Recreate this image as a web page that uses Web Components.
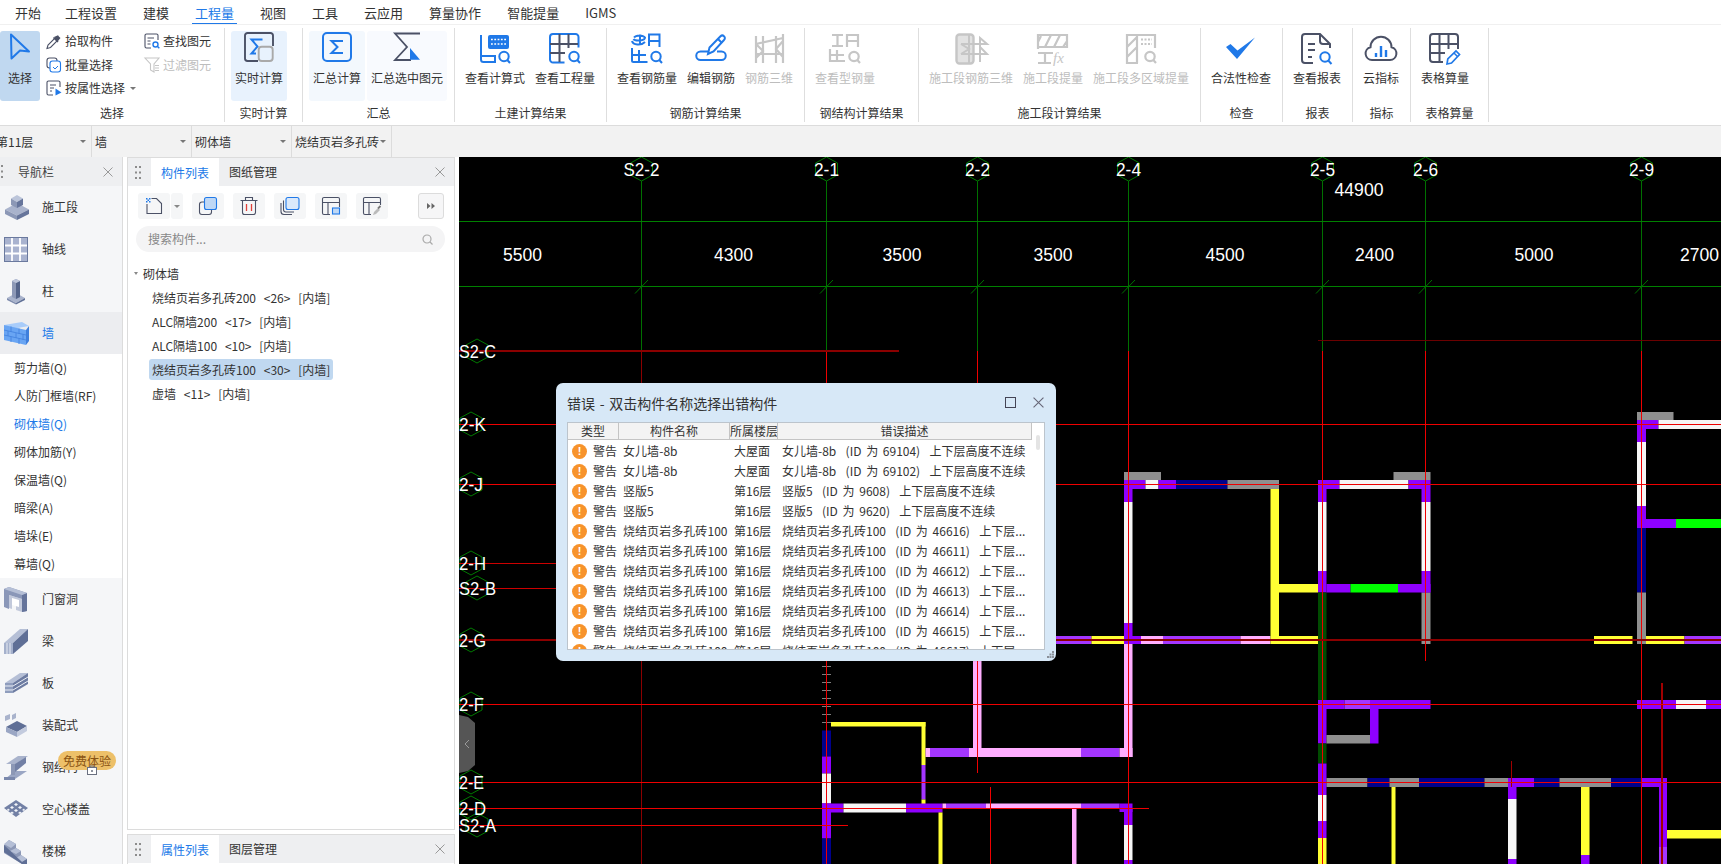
<!DOCTYPE html>
<html lang="zh">
<head>
<meta charset="utf-8">
<title>算量</title>
<style>
html,body{margin:0;padding:0;height:864px;overflow:hidden;background:#fff;color:#333;font:12px/16px "Noto Sans CJK SC","Noto Sans",sans-serif}
app-shell{height:864px}
</style>
</head>
<body>
<app-shell>
  <app-tabs>
    <tab-item style="margin-right:-2px">开始</tab-item><tab-item>工程设置</tab-item><tab-item>建模</tab-item><tab-item active>工程量</tab-item><tab-item>视图</tab-item><tab-item>工具</tab-item><tab-item>云应用</tab-item><tab-item>算量协作</tab-item><tab-item>智能提量</tab-item><tab-item>IGMS</tab-item>
  </app-tabs>
  <app-ribbon>
    <rb-group title="选择" w="225" flush>
      <rb-button icon="cursor" label="选择" active></rb-button>
      <rb-col style="margin-left:6px;width:98px">
        <rb-small icon="pick">拾取构件</rb-small>
        <rb-small icon="batch">批量选择</rb-small>
        <rb-small icon="attr" caret>按属性选择</rb-small>
      </rb-col>
      <rb-col>
        <rb-small icon="find">查找图元</rb-small>
        <rb-small icon="filter" disabled>过滤图元</rb-small>
      </rb-col>
    </rb-group>
    <rb-group title="实时计算" w="78"><rb-button icon="realtime" label="实时计算" hl="#e8f2fd" style="margin-left:1px"></rb-button></rb-group>
    <rb-group title="汇总" w="152">
      <rb-button icon="sum" label="汇总计算" hl="#f3f8fd" style="margin-left:1px"></rb-button>
      <rb-button icon="sumsel" label="汇总选中图元" hl="#f8fafe" style="margin-left:2px"></rb-button>
    </rb-group>
    <rb-group title="土建计算结果" w="152">
      <rb-button icon="formula" label="查看计算式"></rb-button><rb-button icon="qty" label="查看工程量"></rb-button>
    </rb-group>
    <rb-group title="钢筋计算结果" w="198">
      <rb-button icon="rebar" label="查看钢筋量"></rb-button><rb-button icon="edit" label="编辑钢筋"></rb-button><rb-button icon="rebar3d" label="钢筋三维" disabled></rb-button>
    </rb-group>
    <rb-group title="钢结构计算结果" w="114"><rb-button icon="steel" label="查看型钢量" disabled></rb-button></rb-group>
    <rb-group title="施工段计算结果" w="282">
      <rb-button icon="seg3d" label="施工段钢筋三维" disabled></rb-button><rb-button icon="segfx" label="施工段提量" disabled></rb-button><rb-button icon="segarea" label="施工段多区域提量" disabled></rb-button>
    </rb-group>
    <rb-group title="检查" w="82"><rb-button icon="check" label="合法性检查"></rb-button></rb-group>
    <rb-group title="报表" w="70"><rb-button icon="report" label="查看报表"></rb-button></rb-group>
    <rb-group title="指标" w="58"><rb-button icon="cloud" label="云指标"></rb-button></rb-group>
    <rb-group title="表格算量" w="78"><rb-button icon="sheet" label="表格算量"></rb-button></rb-group>
  </app-ribbon>
  <app-selectors>
    <sel-cell w="92" clip>第11层</sel-cell><sel-cell w="100">墙</sel-cell><sel-cell w="100">砌体墙</sel-cell><sel-cell w="100">烧结页岩多孔砖</sel-cell>
  </app-selectors>
  <app-main>
    <nav-panel>
      <nav-item icon="n-seg">施工段</nav-item>
      <nav-item icon="n-axis">轴线</nav-item>
      <nav-item icon="n-col">柱</nav-item>
      <nav-item icon="n-wall" active>墙</nav-item>
      <nav-sub>剪力墙(Q)</nav-sub>
      <nav-sub>人防门框墙(RF)</nav-sub>
      <nav-sub active>砌体墙(Q)</nav-sub>
      <nav-sub>砌体加筋(Y)</nav-sub>
      <nav-sub>保温墙(Q)</nav-sub>
      <nav-sub>暗梁(A)</nav-sub>
      <nav-sub>墙垛(E)</nav-sub>
      <nav-sub>幕墙(Q)</nav-sub>
      <nav-item icon="n-door">门窗洞</nav-item>
      <nav-item icon="n-beam">梁</nav-item>
      <nav-item icon="n-slab">板</nav-item>
      <nav-item icon="n-pre">装配式</nav-item>
      <nav-item icon="n-steel" badge>钢结构</nav-item>
      <nav-item icon="n-hollow">空心楼盖</nav-item>
      <nav-item icon="n-stair">楼梯</nav-item>
    </nav-panel>
    <mid-column>
      <dock-panel grow tab1="构件列表" tab2="图纸管理">
        <part-toolbar></part-toolbar>
        <part-search></part-search>
        <part-tree>
          <tree-row head>砌体墙</tree-row>
          <tree-row>烧结页岩多孔砖200  &lt;26&gt;  [内墙]</tree-row>
          <tree-row>ALC隔墙200  &lt;17&gt;  [内墙]</tree-row>
          <tree-row>ALC隔墙100  &lt;10&gt;  [内墙]</tree-row>
          <tree-row selected>烧结页岩多孔砖100  &lt;30&gt;  [内墙]</tree-row>
          <tree-row>虚墙  &lt;11&gt;  [内墙]</tree-row>
        </part-tree>
      </dock-panel>
      <dock-panel tab1="属性列表" tab2="图层管理"></dock-panel>
    </mid-column>
    <cad-canvas>
      <error-dialog></error-dialog>
    </cad-canvas>
  </app-main>
</app-shell>

<script>
const B='#2079e8',D='#4b5166',G='#c6c6c6';
const ICONS={
 cursor:[20,27,`<path d="M1 1.500 19 18.500 10 17.500 1.500 25.500Z" fill="#c0d8f0" stroke="${B}" stroke-width="2" stroke-linejoin="round"/>`],
 pick:[15,15,`<path d="M1 14.500 2 11 9 4 11.500 6.500 4.500 13.500Z" fill="#fff" stroke="${D}" stroke-width="1.100"/><path d="M8 3 10 5 13 2.500 12 1.200Zm2 2 2 2 2.500-3-1.600-1.600Z" fill="${D}"/><path d="M7.500 3.500 12 8" stroke="${D}" stroke-width="1.500"/>`],
 batch:[15,16,`<rect x="1" y="1" width="10" height="10" rx="2.500" fill="none" stroke="${D}" stroke-width="1.100"/><rect x="4" y="4" width="10.500" height="11" rx="2.500" fill="#fff" stroke="${B}" stroke-width="1.100"/><path d="M7 10l2 2 3-3" fill="none" stroke="${B}"/>`],
 attr:[16,16,`<path d="M7 15H2.500A1.500 1.500 0 0 1 1 13.500V2.500A1.500 1.500 0 0 1 2.500 1h10A1.500 1.500 0 0 1 14 2.500V7" fill="none" stroke="${D}" stroke-width="1.100"/><path d="M4 5h6M4 8h4M4 11h2" stroke="${D}"/><path d="M9.500 8.500 15.500 12.500 9.500 15.500Z" fill="${B}"/>`],
 find:[16,16,`<path d="M7 15H2.500A1.500 1.500 0 0 1 1 13.500V2.500A1.500 1.500 0 0 1 2.500 1h10A1.500 1.500 0 0 1 14 2.500V7" fill="none" stroke="${D}" stroke-width="1.100"/><path d="M3.500 5H10M3.500 8H6.500M3.500 11H6.500" stroke="${D}" stroke-width="1.100"/><circle cx="11.500" cy="11.500" r="2.500" fill="none" stroke="${B}" stroke-width="1.400"/><path d="M13.300 13.300 15.300 15.300" stroke="${B}" stroke-width="1.400"/>`],
 filter:[16,16,`<path d="M1 1H15L10 7V15L6.500 13V7Z" fill="none" stroke="${G}" stroke-width="1.100"/><path d="M11 8.500H15M11 11H15M11 13.500H15" stroke="${G}"/>`],
 realtime:[30,30,`<path d="M14 29H3.500A2.500 2.500 0 0 1 1 26.500V3.500A2.500 2.500 0 0 1 3.500 1H26.500A2.500 2.500 0 0 1 29 3.500V14" fill="none" stroke="${D}" stroke-width="1.900"/><path d="M18.500 7.500H7.500L13.500 14.500 7.500 21.500H12" fill="none" stroke="${B}" stroke-width="2"/><rect x="14.700" y="14.700" width="14" height="14.300" rx="3" fill="#e8f2fd" stroke="#a9a9a9" stroke-width="1.900"/>`],
 sum:[30,30,`<rect x="1" y="1" width="28" height="28" rx="4" fill="none" stroke="${B}" stroke-width="2"/><path d="M21 9H9.500L15.500 15 9.500 21H21" fill="none" stroke="${B}" stroke-width="2"/>`],
 sumsel:[28,30,`<path d="M27 1.500H2L14 15 2 28H18" fill="none" stroke="${D}" stroke-width="1.800"/><path d="M17 16 27 27.800H17Z" fill="${B}"/>`],
 formula:[32,31,`<path d="M2 2V26.500A2.500 2.500 0 0 0 4.500 29H16V23H2" fill="none" stroke="${B}" stroke-width="2"/><rect x="9" y="2" width="21" height="14" rx="2" fill="${B}"/><path d="M12 6.500h15M12 11h15" stroke="#fff" stroke-width="1.600" stroke-dasharray="1.800 1.500"/><circle cx="25" cy="23.500" r="4.700" fill="none" stroke="${B}" stroke-width="2"/><path d="M28.300 27 31 30" stroke="${B}" stroke-width="2"/>`],
 qty:[32,31,`<path d="M15.500 29.500H4A3 3 0 0 1 1 26.500V4A3 3 0 0 1 4 1H26.500A3 3 0 0 1 29.500 4V14.500" fill="none" stroke="${B}" stroke-width="2"/><path d="M1 11H29M1 20H16M10.500 1V29M19.500 1V15" stroke="${D}" stroke-width="2"/><circle cx="25" cy="23.500" r="4.700" fill="none" stroke="${B}" stroke-width="2"/><path d="M28.300 27 31 30" stroke="${B}" stroke-width="2"/>`],
 rebar:[32,31,`<path d="M9 12V1.500M3 4.500A6 3.500 0 0 1 14 4.500C14 8 4 8.500 2.500 6M1 8c1 4 9 5 13 1" fill="none" stroke="${B}" stroke-width="2"/><path d="M18 13V1.500H28.500V14M18 8H28.500" fill="none" stroke="${B}" stroke-width="2"/><path d="M1 15V27.500A1.500 1.500 0 0 0 2.500 29H16.500M8 17V29M1 22H15" fill="none" stroke="${B}" stroke-width="2"/><circle cx="25" cy="23.500" r="4.700" fill="none" stroke="${B}" stroke-width="2"/><path d="M28.300 27 31 30" stroke="${B}" stroke-width="2"/>`],
 edit:[30,30,`<path d="M12 18.500H4.500A4 4 0 0 0 4.500 27H25.500A4 4 0 0 0 25.500 18.500H21" fill="none" stroke="${B}" stroke-width="2"/><path d="M12 21 13.500 14.500 24.500 3.200A2.500 2.500 0 0 1 28 3.200 2.500 2.500 0 0 1 28 7L17.500 18.500Z" fill="none" stroke="${B}" stroke-width="2"/><path d="M22 6 26 10" stroke="${B}" stroke-width="2"/>`],
 rebar3d:[30,31,`<g fill="none" stroke="${G}" stroke-width="2.200"><path d="M2 3V30M9 3V30M22 3V30M29 1V30M2 11 29 5M2 21H29M2 11 9 18 2 25M29 8 22 16 29 24"/></g>`],
 steel:[32,31,`<g fill="none" stroke="${G}" stroke-width="2.200"><path d="M3 2H14M8.500 2V13M3 13H14M18 14V2H29V14M18 8H29M1 16V28H16M8 17V28M1 22H15"/><circle cx="25" cy="23.500" r="4.700"/><path d="M28.300 27 31 30"/></g>`],
 seg3d:[32,32,`<g fill="none" stroke="${G}"><rect x="1.500" y="1.500" width="17" height="29" rx="3" fill="#e2e2e2" stroke-width="2.400"/><path d="M6 11H32L25 5V29M6 21H32L25 14M14 2V30M6 11 14 16 6 21" stroke-width="2"/></g>`],
 segfx:[32,32,`<g fill="none" stroke="${G}" stroke-width="2.200"><path d="M1 16V2H30V14H1M8 14 14 2M17 14 23 2M26 14 30 8M1 9 4 3"/><path d="M1 20H16M1 30H14M8 20V30"/></g><text x="16" y="30" font-family="Liberation Serif" font-style="italic" font-size="15" fill="${G}">fx</text>`],
 segarea:[32,32,`<g fill="none" stroke="${G}" stroke-width="2.200"><path d="M13 30H2V2H30V15M12 2V30M2 14 12 4M2 24 12 14"/><circle cx="25" cy="23.500" r="4.700"/><path d="M28.300 27 31 30"/></g><path d="M16 6.500h11M16 11h11" stroke="${G}" stroke-width="1.800" stroke-dasharray="2 1.500"/>`],
 check:[30,30,`<path d="M0 14 4.500 11 11.500 17.500 29 4.500 11 26Z" fill="${B}"/>`],
 report:[32,32,`<path d="M12 30H4A3 3 0 0 1 1 27V4A3 3 0 0 1 4 1H19L29 11V15M19 1V8A3 3 0 0 0 22 11H29" fill="none" stroke="${D}" stroke-width="2"/><path d="M7 11H14M7 17H14M7 24H11" stroke="${D}" stroke-width="2"/><circle cx="24" cy="24" r="4.700" fill="none" stroke="${B}" stroke-width="2"/><path d="M27.300 27.500 30.500 31" stroke="${B}" stroke-width="2"/>`],
 cloud:[32,30,`<path d="M8 27H7A6.500 6.500 0 0 1 5.500 14.200 10.500 10.500 0 0 1 26.500 14.200 6.500 6.500 0 0 1 25 27Z" fill="none" stroke="${D}" stroke-width="2"/><path d="M11 20V24M16 13V24M21 17V24" stroke="${B}" stroke-width="2.400"/>`],
 sheet:[32,32,`<path d="M14 29H4A3 3 0 0 1 1 26V4A3 3 0 0 1 4 1H26A3 3 0 0 1 29 4V16" fill="none" stroke="${D}" stroke-width="2"/><path d="M1 11H29M1 20H16M10.500 1V29M19.500 1V16" stroke="${D}" stroke-width="2"/><path d="M18 31 18.800 26 27 18 30.500 21.500 22.500 30Z" fill="none" stroke="${B}" stroke-width="1.700"/><path d="M25 20 28.500 23.500" stroke="${B}" stroke-width="1.500"/>`],
 't-new':[20,20,`<path d="M3 8V17.500H17.500V7.500L12.500 2.500H7.500" fill="none" stroke="${D}" stroke-width="1.100"/><path d="M2 2h1.500v1.500H2zM5 2h1.500v1.500H5zM3.500 3.500H5V5H3.500zM2 5h1.500v1.500H2zM5 5h1.500v1.500H5z" fill="${B}"/>`],
 't-copy':[20,20,`<rect x="1.500" y="6" width="12" height="12.500" rx="2.500" fill="none" stroke="${D}" stroke-width="1.100"/><rect x="6.500" y="1.500" width="12" height="12" rx="2" fill="#bfd8f5" stroke="${B}" stroke-width="1.100"/>`],
 't-del':[20,20,`<path d="M1.500 4.500H18.500M6.500 4V1.500H13.500V4M3.500 4.500V16.500A2 2 0 0 0 5.500 18.500H14.500A2 2 0 0 0 16.500 16.500V4.500" fill="none" stroke="${D}" stroke-width="1.100"/><path d="M7.500 8V15M12.500 8V15" stroke="#e0403a" stroke-width="1.300"/>`],
 't-multi':[20,20,`<path d="M1 7V15.500A3 3 0 0 0 4 18.500H12" fill="none" stroke="${D}" stroke-width="1.100"/><path d="M3.500 4.500V13.500A2.500 2.500 0 0 0 6 16H14" fill="none" stroke="${D}" stroke-width="1.100"/><rect x="6" y="1.500" width="13" height="12" rx="2" fill="#dbe9fb" stroke="${B}" stroke-width="1.100"/>`],
 't-plan':[20,20,`<path d="M9 18.500H3A1.500 1.500 0 0 1 1.500 17V3A1.500 1.500 0 0 1 3 1.500H17A1.500 1.500 0 0 1 18.500 3V11M1.500 6.500H18.500M7 6.500V18.500" fill="none" stroke="${D}" stroke-width="1.100"/><rect x="11.500" y="12" width="7" height="6" fill="#bfd8f5" stroke="${B}" stroke-width="1.100"/>`],
 't-planedit':[20,20,`<path d="M9 18.500H3A1.500 1.500 0 0 1 1.500 17V3A1.500 1.500 0 0 1 3 1.500H17A1.500 1.500 0 0 1 18.500 3V9M1.500 6.500H18.500M7 6.500V18.500" fill="none" stroke="${D}" stroke-width="1.100"/><path d="M11 19 12 16 16 12 18 14 14 18Z" fill="#bbb"/><path d="M16 12.500 18.500 10" stroke="#777" stroke-width="1.800"/>`],
 'n-seg':[26,26,`<path d="M13 9 25 15.500 13 21.500 1 15.500Z" fill="#a9b3cc"/><path d="M1 15.500 13 21.500V26L1 20Z" fill="#8c98b6"/><path d="M25 15.500 13 21.500V26L25 20Z" fill="#66759b"/><path d="M13 1 19 4.500 13 8 7 4.500Z" fill="#bcc5da"/><path d="M7 4.500 13 8V14L7 11Z" fill="#8c98b6"/><path d="M19 4.500 13 8V14L19 11Z" fill="#66759b"/>`],
 'n-axis':[24,25,`<rect x="0" y="0" width="24" height="25" fill="#a9b3cf"/><rect x="0.500" y="0.500" width="23" height="24" fill="none" stroke="#6a799e"/><path d="M8 1V24M16 1V24M1 8.500H23M1 16.500H23" stroke="#fff" stroke-width="1.800"/>`],
 'n-col':[24,26,`<path d="M3 20 12 15 21 20 12 25Z" fill="#a9b3cc"/><path d="M3 20 12 25V26.500L3 22Z" fill="#7e8bad"/><path d="M21 20 12 25V26.500L21 22Z" fill="#5f6f96"/><path d="M8 3 12 1 16 3V19L12 21 8 19Z" fill="#8c98b6"/><path d="M12 5 16 3V19L12 21Z" fill="#536389"/><path d="M8 3 12 1 16 3 12 5Z" fill="#bcc5da"/>`],
 'n-wall':[26,26,`<path d="M0 5 18 2 25 6 8 9Z" fill="#a8ccfa"/><path d="M0 5 22 10V25L0 20Z" fill="#69a5f3"/><path d="M22 10 25 6V21L22 25Z" fill="#3f7fdc"/><path d="M0 10 22 15M0 15 22 20M7 6.500V12M15 8.500V14M4 11V16M12 13V18M19 14.500V20M7 16.500V22M15 18.500V24" stroke="#4585e0" stroke-width=".9" fill="none"/>`],
 'n-door':[24,25,`<path d="M0 2 5 0 23 6V24L18 25V12L5 8V22L0 20Z" fill="#8a97b8"/><path d="M18 8 23 6V24L18 25Z" fill="#65749b"/><path d="M0 2 5 0 23 6 18 8Z" fill="#b5bfd6"/><path d="M5 8 18 12V25L12 23V18L8 17V22L5 21Z" fill="#a0acc8" opacity=".6"/><rect x="8" y="11.500" width="7" height="7" fill="#fff" transform="skewY(17) translate(0 -3)"/>`],
 'n-beam':[24,25,`<path d="M0 14 16 0 24 0 9 14Z" fill="#b5bfd6"/><path d="M9 14 24 0V12L9 25Z" fill="#5f6f96"/><rect x="0" y="14" width="9" height="11" fill="#a5b1cc"/><path d="M3 14V25M6 14V25" stroke="#e8ecf4"/>`],
 'n-slab':[24,22,`<path d="M1 11 16 1H24L9 11Z" fill="#b5bfd6"/><path d="M1 11H9V21H1Z" fill="#8f9dbd"/><path d="M9 11 24 1V12L9 21Z" fill="#6d7ca2"/><path d="M1 14H9M1 18H9M9 14 24 5M9 18 24 9" stroke="#e8ecf4"/>`],
 'n-pre':[24,24,`<path d="M1 3 6 1V6L1 8ZM8 2 12 0V5L8 7Z" fill="#a9b3cc"/><path d="M2 14 13 8 23 13 13 19Z" fill="#5f6f96"/><path d="M2 14 13 19V24L2 19Z" fill="#9aa6c4"/><path d="M23 13 13 19V24L23 18Z" fill="#c3cbde"/>`],
 'n-steel':[24,25,`<path d="M2 9 14 1 24 1 12 9Z" fill="#a9b3cc"/><path d="M1 24 11 16 23 16 11 24Z" fill="#9aa6c4"/><path d="M7 9H11V20H7Z" fill="#8c98b6"/><path d="M11 9 22 2V8L11 17Z" fill="#7280a5"/><path d="M0 22H11V25H0Z" fill="#7a88ac"/>`],
 'n-hollow':[24,18,`<path d="M12 0 24 8 12 17 0 8Z" fill="#7280a5"/><g fill="#f2f4f8"><path d="M12 3 14 4.500 12 6 10 4.500ZM8 6 10 7.500 8 9 6 7.500ZM16 6 18 7.500 16 9 14 7.500ZM12 9 14 10.500 12 12 10 10.500ZM4 8.500 6 10 4 11 3 10ZM20 8.500 21 10 20 11 18 10ZM8 11.500 10 13 8 14 6 13ZM16 11.500 18 13 16 14 14 13Z"/></g>`],
 'n-stair':[24,25,`<path d="M0 6 5 1 12 5V9L17 12V16L23 20V25L18 25 0 14Z" fill="#8c98b6"/><path d="M5 1 12 5 7 9 0 5ZM12 9 17 12 12 15 6 12ZM17 16 23 20 18 23 12 19Z" fill="#b5bfd6"/><path d="M0 6V13L18 25V23ZM23 20V25H18V23Z" fill="#5f6f96"/>`],
};
const LOCK=`<svg width="10" height="10" viewBox="0 0 10 10"><rect x=".5" y="2.500" width="9" height="7" fill="#fff" stroke="#6a7080"/><path d="M3 2.500V1h4V2.500" fill="none" stroke="#6a7080"/><circle cx="5" cy="6" r="1" fill="#6a7080"/></svg>`;
function iconMarkup(name){
  const i=ICONS[name]; if(!i) return '';
  return `<svg width="${i[0]}" height="${i[1]}" viewBox="0 0 ${i[0]} ${i[1]}" style="display:block;overflow:visible">${i[2]}</svg>`;
}
function el(name,fn){customElements.define(name,class extends HTMLElement{
  constructor(){super();this.attachShadow({mode:'open'})}
  connectedCallback(){if(!this.shadowRoot.innerHTML)this.shadowRoot.innerHTML=fn(this)}
})}

el('app-shell',()=>`<style>:host{display:flex;flex-direction:column;width:1721px;height:864px;overflow:hidden}</style><slot></slot>`);
el('app-tabs',()=>`<style>:host{display:flex;height:24px;padding-left:2px;box-sizing:border-box;background:#fff}</style><slot></slot>`);
el('tab-item',h=>`<style>:host{display:block;padding:0 13px;height:24px;box-sizing:border-box;font-size:13px;line-height:26px;color:#333;position:relative}
 :host([active]){color:${B}}:host([active])::after{content:"";position:absolute;left:-3px;right:-3px;margin:0 13px;bottom:0;height:1.500px;background:${B}}</style><slot></slot>`);
el('app-ribbon',()=>`<style>:host{display:flex;height:102px;box-sizing:border-box;padding-top:3px;border-top:1px solid #f0f0f0;border-bottom:1px solid #dcdcdc;background:#fff}</style><slot></slot>`);
el('rb-group',h=>`<style>:host{display:flex;flex-direction:column;width:${h.getAttribute('w')}px;height:94px;box-sizing:border-box;border-right:1px solid #dedede;flex:none}
 .row{display:flex;height:76px;padding:3px ${h.hasAttribute('flush')?'0':'5px'} 0;box-sizing:border-box}
 .t{text-align:center;line-height:18px;height:18px;color:#333}</style><div class="row"><slot></slot></div><div class="t">${h.getAttribute('title')}</div>`);
el('rb-button',h=>{const d=h.hasAttribute('disabled'),a=h.hasAttribute('active'),hl=h.getAttribute('hl');return `<style>:host{display:flex;flex-direction:column;align-items:center;height:70px;box-sizing:border-box;padding:2px 5px 0;border-radius:3px;flex:none;
 ${a?'background:#c0d8f0;width:40px;padding-left:0;padding-right:0;':''}${hl?`background:${hl};padding-left:4px;padding-right:4px;padding-top:1px;`:''}color:${d?'#bdbdbd':'#333'}}
 .ic{height:${a?37:hl?31:30}px;margin-bottom:${a?0:7}px;display:flex;align-items:flex-start;justify-content:center}
 .l{line-height:16px;white-space:nowrap}</style><div class="ic">${iconMarkup(h.getAttribute('icon'))}</div><div class="l">${h.getAttribute('label')}</div>`});
el('rb-col',()=>`<style>:host{display:flex;flex-direction:column;gap:7.500px;padding-top:2px}</style><slot></slot>`);
el('rb-small',h=>`<style>:host{display:flex;align-items:center;height:16px;color:${h.hasAttribute('disabled')?'#bdbdbd':'#333'};white-space:nowrap}
 .i{width:19px;flex:none}.c{width:0;height:0;border:3px solid transparent;border-top:3.500px solid #777;border-bottom:0;margin-left:5px}</style><span class="i">${iconMarkup(h.getAttribute('icon'))}</span><slot></slot>${h.hasAttribute('caret')?'<span class="c"></span>':''}`);
el('app-selectors',()=>`<style>:host{display:flex;height:31px;box-sizing:border-box;background:#f2f2f2}</style><slot></slot>`);
el('sel-cell',h=>`<style>:host{display:flex;align-items:center;width:${h.getAttribute('w')}px;box-sizing:border-box;border-right:1px solid #dcdcdc;padding-left:${h.hasAttribute('clip')?0:3}px;padding-right:5px;overflow:hidden;flex:none;color:#333;white-space:nowrap}
 .t{flex:1;${h.hasAttribute('clip')?'margin-left:-4px;':''}}.c{width:0;height:0;border:3px solid transparent;border-top:3.500px solid #777;border-bottom:0}</style><span class="t"><slot></slot></span><span class="c"></span>`);
el('app-main',()=>`<style>:host{display:flex;height:707px;overflow:hidden;background:#fff}</style><slot></slot>`);

const GRIP=`<svg width="6" height="13" viewBox="0 0 6 13" style="display:block"><g fill="#8c8c8c"><rect x="0" y="0" width="2" height="2"/><rect x="4" y="0" width="2" height="2"/><rect x="0" y="5.500" width="2" height="2"/><rect x="4" y="5.500" width="2" height="2"/><rect x="0" y="11" width="2" height="2"/><rect x="4" y="11" width="2" height="2"/></g></svg>`;
const CLOSEX=`<svg width="10" height="10" viewBox="0 0 10 10" style="display:block"><path d="M.5.500 9.500 9.500M9.500.500 .5 9.500" stroke="#999" stroke-width="1"/></svg>`;

el('nav-panel',()=>`<style>:host{display:flex;flex-direction:column;width:123px;flex:none;box-sizing:border-box;border-right:1.500px solid #dcdcdc;height:707px;overflow:hidden;position:relative;background:#f5f6f8}
 .h{display:flex;align-items:center;height:29px;flex:none;background:#eeeff1;padding-right:9px;box-sizing:border-box}
 .g{margin-left:-3px;width:21px}.t{flex:1;color:#444}</style>
 <div class="h"><span class="g">${GRIP}</span><span class="t">导航栏</span>${CLOSEX}</div><slot></slot>`);
el('nav-item',h=>`<style>:host{display:flex;align-items:center;height:42px;flex:none;box-sizing:border-box;padding-left:4px;position:relative;background:${h.hasAttribute('active')?'#ecedf0':'transparent'};color:${h.hasAttribute('active')?B:'#333'}}
 .i{width:38px;flex:none}.b{position:absolute;left:58px;top:5px;width:58px;height:19px;border-radius:10px;background:#edc069;color:#8a5413;text-align:center;line-height:19px}
 .l{position:absolute;left:87px;top:16px;z-index:1}</style><span class="i">${iconMarkup(h.getAttribute('icon'))}</span><slot></slot>${h.hasAttribute('badge')?`<span class="b">免费体验</span><span class="l">${LOCK}</span>`:''}`);
el('nav-sub',h=>`<style>:host{display:flex;align-items:center;height:28px;flex:none;padding-left:14px;background:#fff;color:${h.hasAttribute('active')?B:'#333'}}</style><slot></slot>`);

el('mid-column',()=>`<style>:host{display:flex;flex-direction:column;gap:4px;width:328px;margin-left:4px;flex:none;height:707px}</style><slot></slot>`);
el('dock-panel',h=>`<style>:host{display:flex;flex-direction:column;box-sizing:border-box;border:1px solid #dcdcdc;${h.hasAttribute('grow')?'flex:1;min-height:0;':'height:30px;flex:none;border-bottom:0;'}background:#fff}
 .h{display:flex;height:28px;flex:none;background:#eeeff1;align-items:center;padding-left:7px;padding-right:9px}
 .g{width:16px}.a{width:68px;height:28px;line-height:30px;background:#fff;color:${B};text-align:center}.b{width:68px;text-align:center;color:#333;flex:1;max-width:68px}.sp{flex:1}</style>
 <div class="h"><span class="g">${GRIP}</span><span class="a">${h.getAttribute('tab1')}</span><span class="b">${h.getAttribute('tab2')}</span><span class="sp"></span>${CLOSEX}</div><slot></slot>`);
el('part-toolbar',()=>{const b=(n,w)=>`<span class="b" style="width:${w||32}px">${iconMarkup(n)}</span>`;return `<style>:host{display:flex;height:26px;padding:7px 0 0 10px;align-items:flex-start}
 .b{display:flex;align-items:center;justify-content:center;height:26px;background:#f5f6f7;border-radius:3px;margin-right:9px;box-sizing:border-box;flex:none}
 .x{margin-right:0;border:1px solid #dcdcdc;width:26px;margin-left:21px;border-radius:3px;background:#f6f6f7}.d{margin-right:1px}
 .caret{width:12px;margin-right:9px}.c{width:0;height:0;border:3px solid transparent;border-top:3.500px solid #888;border-bottom:0}</style>
 <span class="b d" style="width:32px">${iconMarkup('t-new')}</span><span class="b caret"><span class="c"></span></span>${b('t-copy')}${b('t-del')}${b('t-multi')}${b('t-plan')}${b('t-planedit')}
 <span class="b x"><svg width="8" height="6" viewBox="0 0 8 6"><path d="M0 0 3.500 3 0 6ZM4.500 0 8 3 4.500 6Z" fill="#666"/></svg></span>`});
el('part-search',()=>`<style>:host{display:flex;align-items:center;height:26px;margin:7px 9px 0 8px;padding:0 12px;background:#f4f4f5;border-radius:13px;color:#888}
 .t{flex:1}</style><span class="t">搜索构件...</span><svg width="11" height="11" viewBox="0 0 11 11"><circle cx="5" cy="5" r="4" fill="none" stroke="#aaa" stroke-width="1.200"/><path d="M8 8 10.500 10.500" stroke="#aaa" stroke-width="1.200"/></svg>`);
el('part-tree',()=>`<style>:host{display:flex;flex-direction:column;padding:9px 0 0 6px;flex:1}</style><slot></slot>`);
el('tree-row',h=>{const head=h.hasAttribute('head'),s=h.hasAttribute('selected');return `<style>:host{display:flex;align-items:center;height:24px;white-space:pre;word-spacing:1.200px;color:#333}
 .w{display:inline-block;${head?'':`margin-left:15px;padding:0 3px;`}line-height:21px;height:21px;border-radius:3px;${s?'background:#c0d8f0;':''}}
 .c{width:0;height:0;border:2.500px solid transparent;border-top:3.500px solid #888;border-bottom:0;margin-right:5px}</style>${head?'<span class="c"></span>':''}<span class="w"><slot></slot></span>`});

/* CAD */
const C={p:'#8f00ff',l:'#a436ff',k:'#ffaeff',y:'#ffff33',w:'#f6f6f6',n:'#00008b',g:'#8f8f8f',e:'#00ff00',d:'#004b00'};
const W=[
[1124,472,1161,480,'g'],[1124,480,1145.500,489,'p'],[1145.500,480,1158.500,489,'w'],[1158.500,480,1176,489,'p'],[1176,480,1227.500,489,'n'],[1227.500,480,1279,489,'g'],
[1270.500,489,1279,636,'y'],[1279,584,1318,592.500,'y'],
[1124,489,1132.500,502,'p'],[1124,502,1132.500,623,'w'],[1124,623,1132.500,644,'p'],[1124,644,1132.500,757,'k'],
[1318,480,1339.500,489,'p'],[1339.500,480,1408.500,489,'w'],[1408.500,480,1430.500,489,'p'],[1393.500,472,1430.500,480,'g'],
[1318,489,1326.500,502,'p'],[1318,502,1326.500,571,'w'],[1318,571,1326.500,592.500,'p'],[1318,592.500,1326.500,700,'d'],[1318,700,1326.500,743.500,'p'],[1318,743.500,1326.500,763.500,'d'],[1318,763.500,1326.500,795,'p'],[1318,795,1326.500,821,'w'],[1318,821,1326.500,838,'p'],[1318,838,1326.500,864,'y'],
[1421.500,489,1430.500,502,'p'],[1421.500,502,1430.500,571,'w'],[1421.500,571,1430.500,592.500,'p'],[1421.500,592.500,1430.500,644,'g'],
[1326.500,584,1350.500,592.500,'p'],[1350.500,584,1398,592.500,'e'],[1398,584,1430.500,592.500,'p'],
[1637,412,1673.500,420,'g'],[1637,420,1658.500,429,'p'],[1658.500,420,1721,429,'w'],[1637,429,1646,442,'p'],[1637,442,1646,506,'w'],[1637,506,1646,528,'p'],[1637,528,1646,592.500,'n'],[1637,592.500,1646,644,'g'],
[1646,519,1676,528,'p'],[1676,519,1721,528,'e'],
[1056,636,1091.500,644,'l'],[1091.500,636,1124,644,'y'],[1124,636,1141,644,'p'],[1141,636,1163,644,'k'],[1163,636,1240.500,644,'l'],[1240.500,636,1270.500,644,'k'],[1270.500,636,1318,644,'y'],
[1594,636,1632.500,644,'y'],[1646,636,1684.500,644,'y'],[1684.500,636,1721,644,'l'],
[1318,700,1344.500,709,'p'],[1344.500,700,1370,709,'l'],[1370,700,1430.500,709,'p'],[1370,709,1378.500,743.500,'p'],[1326.500,735,1370,743.500,'g'],
[1637,700,1676,709,'p'],[1676,700,1706,709,'w'],[1706,700,1721,709,'p'],
[1326.500,778,1367.500,787,'g'],[1367.500,778,1389.500,787,'n'],[1389.500,778,1419,787,'g'],[1419,778,1484.500,787,'n'],[1484.500,778,1508,787,'g'],[1508,778,1534,787,'p'],[1534,778,1559.500,787,'n'],[1559.500,778,1611,787,'g'],[1611,778,1641.500,787,'n'],[1641.500,778,1667,787,'p'],
[1508,787,1516.500,799,'p'],[1508,799,1516.500,859,'w'],[1508,859,1516.500,864,'p'],
[1391.500,787,1395.500,864,'y'],[1581,787,1589.500,855,'y'],[1581,855,1589.500,864,'p'],
[1659,787,1667,847,'p'],[1659,847,1667,864,'l'],[1667,830,1721,838.500,'y'],
[831,722,925.500,726.500,'y'],[921.500,722,925.500,765,'y'],[921.500,765,925.500,799.500,'l'],[921.500,799.500,925.500,804,'y'],
[925.500,748,930,757,'k'],[930,748,969,757,'l'],[969,748,1081,757,'k'],[1081,748,1119.500,757,'l'],[1119.500,748,1132.500,757,'k'],
[973,661,981.500,748,'k'],
[822,730.500,831,756.500,'n'],[822,756.500,831,773.500,'p'],[822,773.500,831,803.500,'w'],[822,803.500,831,838.500,'p'],[822,838.500,831,864,'n'],
[822,803.500,843.500,812.500,'p'],[843.500,803.500,906,812.500,'w'],[906,803.500,942.500,812.500,'p'],[942.500,803.500,946,808,'k'],[946,803.500,986,808,'l'],[986,803.500,1081,808,'k'],[1081,803.500,1119.500,808,'l'],[1119.500,803.500,1132.500,812,'p'],
[938.500,812.500,942.500,864,'y'],[1072,808,1076.500,864,'k'],
[1124,808,1132.500,825,'p'],[1124,825,1132.500,860,'w'],[1124,860,1132.500,864,'p'],
];
const R='#ee0000',DR='#8b0000';
const HL=[[424,459,1721,R,1],[484,459,1721,R,1],[563,459,556,'#cc0000',1],[588,459,556,'#cc0000',1],[640,459,1721,DR,2],[704,459,1721,R,1],[782,459,1721,R,1],[808,459,1149,R,1],[825,459,848,R,1],[351,459,899,DR,2],[340,1318,1721,'#6b0000',1]];
const VL=[[641,351,864,DR,1],[826,351,864,R,1],[977,351,773,R,1],[1128,351,864,R,1],[1322,351,864,R,1],[1425,351,661,R,1],[1641,351,864,R,1],[1662,683,864,'#a00000',2],[1511,761,787,'#a00000',1],[990,787,864,R,1]];
const VG=[[641,'S2-2',36],[826,'2-1',25],[977,'2-2',25],[1128,'2-4',25],[1322,'2-5',25],[1425,'2-6',25],[1641,'2-9',25]];
const DIM=[[522.500,'5500'],[733.500,'4300'],[902,'3500'],[1053,'3500'],[1225,'4500'],[1374.500,'2400'],[1534,'5000'],[1699.500,'2700']];
const HX=[[351,'S2-C',37,477],[424,'2-K',27,471],[484,'2-J',24,471],[563,'2-H',27,471],[588,'S2-B',37,477],[640,'2-G',27,471],[704,'2-F',25,471],[782,'2-E',25,471],[808,'2-D',27,471],[825,'S2-A',37,477]];
const hex=(x,y)=>`<polygon points="${x},${y-12} ${x+11},${y-6} ${x+11},${y+6} ${x},${y+12} ${x-11},${y+6} ${x-11},${y-6}" fill="none" stroke="#007a00"/>`;
const T=(x,y,s,w,anchor)=>`<text x="${x}" y="${y}" text-anchor="${anchor||'middle'}" textLength="${w}" lengthAdjust="spacingAndGlyphs">${s}</text>`;
el('cad-canvas',()=>{
 let s='';
 for(const w of W)s+=`<rect x="${w[0]}" y="${w[1]}" width="${Math.abs(w[2]-w[0])}" height="${Math.abs(w[3]-w[1])}" fill="${C[w[4]]}"/>`;
 s+=`<g stroke="#7e7e7e" shape-rendering="crispEdges">`;for(const y of [666,674,682,690,698,706,714,722])s+=`<path d="M822 ${y}.5H831"/>`;s+='</g>';
 s+=`<g stroke="#007000" shape-rendering="crispEdges">`;
 for(const v of VG)s+=`<path d="M${v[0]}.5 181V351"/>`;
 s+=`<path d="M459 221.500H1721M459 286.500H1721" stroke="#008000"/></g>`;
 s+=`<g stroke="#007000">`;for(const v of VG)s+=`<path d="M${v[0]-6} 293.500 ${v[0]+7} 280"/>`;s+='</g>';
 for(const v of VG)s+=hex(v[0]+.5,169);
 for(const h of HX)s+=hex(h[3],h[0]);
 s+='<g shape-rendering="crispEdges">';
 for(const v of VL){const o=v[4]%2?.5:0;s+=`<path d="M${v[0]+o} ${v[1]}V${v[2]}" stroke="${v[3]}" stroke-width="${v[4]}"/>`}
 for(const h of HL){const o=h[4]%2?.5:0;s+=`<path d="M${h[1]} ${h[0]+o}H${h[2]}" stroke="${h[3]}" stroke-width="${h[4]}"/>`}
 s+='</g><g fill="#fff" font-family="Liberation Sans" font-size="19">';
 for(const v of VG)s+=T(v[0]+.5,176,v[1],v[2]);
 for(const d of DIM)s+=T(d[0],261,d[1],39);
 s+=T(1359,196,'44900',49);
 for(const h of HX)s+=T(459,h[0]+7,h[1],h[2],'start');
 s+='</g>';
 return `<style>:host{display:block;position:relative;margin-left:4px;flex:1;background:#000;overflow:hidden;height:707px}
 svg{display:block;position:absolute;left:0;top:0}
 .fold{position:absolute;left:0;top:558px;width:16px;height:58px;background:#555;clip-path:polygon(0 0,9px 2px,16px 8px,16px 50px,9px 56px,0 58px);display:flex;align-items:center;justify-content:center}</style>
 <svg width="1262" height="707" viewBox="459 157 1262 707">${s}</svg><div class="fold"><svg style="position:static" width="6" height="10" viewBox="0 0 6 10"><path d="M5 1 1 5 5 9" fill="none" stroke="#9a9a9a"/></svg></div><slot></slot>`;
});
const ROWS=[
['女儿墙-8b','大屋面','女儿墙-8b  (ID 为 69104)  上下层高度不连续'],['女儿墙-8b','大屋面','女儿墙-8b  (ID 为 69102)  上下层高度不连续'],
['竖版5','第16层','竖版5  (ID 为 9608)  上下层高度不连续'],['竖版5','第16层','竖版5  (ID 为 9620)  上下层高度不连续'],
...[46616,46611,46612,46613,46614,46615,46617].map(i=>['烧结页岩多孔砖100','第16层',`烧结页岩多孔砖100  (ID 为 ${i})  上下层...`])];
el('error-dialog',()=>`<style>:host{position:absolute;left:97px;top:226px;width:500px;height:278px;background:#d7e8f7;border-radius:7px;display:flex;flex-direction:column;padding:0 11px 11px;box-sizing:border-box;box-shadow:0 0 1px #2228;color:#333}
 .title{display:flex;align-items:center;height:39px;flex:none}.title b{flex:1;font-weight:400;font-size:14px;word-spacing:1.500px}
 .max{width:9px;height:9px;border:1px solid #445;margin-right:17px}.x{margin-right:1px}
 .table{flex:1;background:#fff;border:1px solid #bcc4cc;position:relative;overflow:hidden;min-height:0}
 .head{display:flex;height:16px;width:463px;background:#f3f3f3;border-bottom:1px solid #c4c4c4;border-right:1px solid #c4c4c4;line-height:16px;text-align:center;white-space:nowrap;box-sizing:content-box}
 .head span{border-right:1px solid #c4c4c4;box-sizing:border-box;flex:none;overflow:hidden}
 .row{display:flex;height:20px;align-items:center;white-space:pre;line-height:20px}
 .row .ic{width:25px;display:flex;padding-left:4px;box-sizing:border-box;flex:none}
 .c1{width:30px;flex:none}.c2{width:111px;flex:none;letter-spacing:.06px}.c3{width:48px;flex:none}.c4{flex:1;overflow:hidden;word-spacing:2px}
 .dot{width:15px;height:15px;border-radius:50%;background:#f7932c;color:#fff;font:700 11px/15px "Liberation Sans",sans-serif;text-align:center}
 .sb{position:absolute;left:468px;top:12px;width:4px;height:15px;background:#e4e4e4;border-radius:2px}
 .grip{position:absolute;right:2px;bottom:3px}</style>
 <div class="title"><b>错误 - 双击构件名称选择出错构件</b><span class="max"></span><span class="x">${CLOSEX.replace('width="10" height="10"','width="11" height="11"').replace('#999','#667')}</span></div>
 <div class="table"><div class="head"><span style="width:51px">类型</span><span style="width:111px">构件名称</span><span style="width:48px">所属楼层</span><span style="flex:1;border-right:0">错误描述</span></div>
 <div style="height:1px"></div>
 ${ROWS.map(r=>`<div class="row"><span class="ic"><span class="dot">!</span></span><span class="c1">警告</span><span class="c2">${r[0]}</span><span class="c3">${r[1]}</span><span class="c4">${r[2]}</span></div>`).join('')}
 <div class="sb"></div></div>
 <svg class="grip" width="7" height="7" viewBox="0 0 7 7"><g fill="#8a9099"><rect x="5" y="0" width="2" height="2"/><rect x="2.500" y="2.500" width="2" height="2"/><rect x="5" y="2.500" width="2" height="2"/><rect x="0" y="5" width="2" height="2"/><rect x="2.500" y="5" width="2" height="2"/><rect x="5" y="5" width="2" height="2"/></g></svg>`);
</script>
</body>
</html>
